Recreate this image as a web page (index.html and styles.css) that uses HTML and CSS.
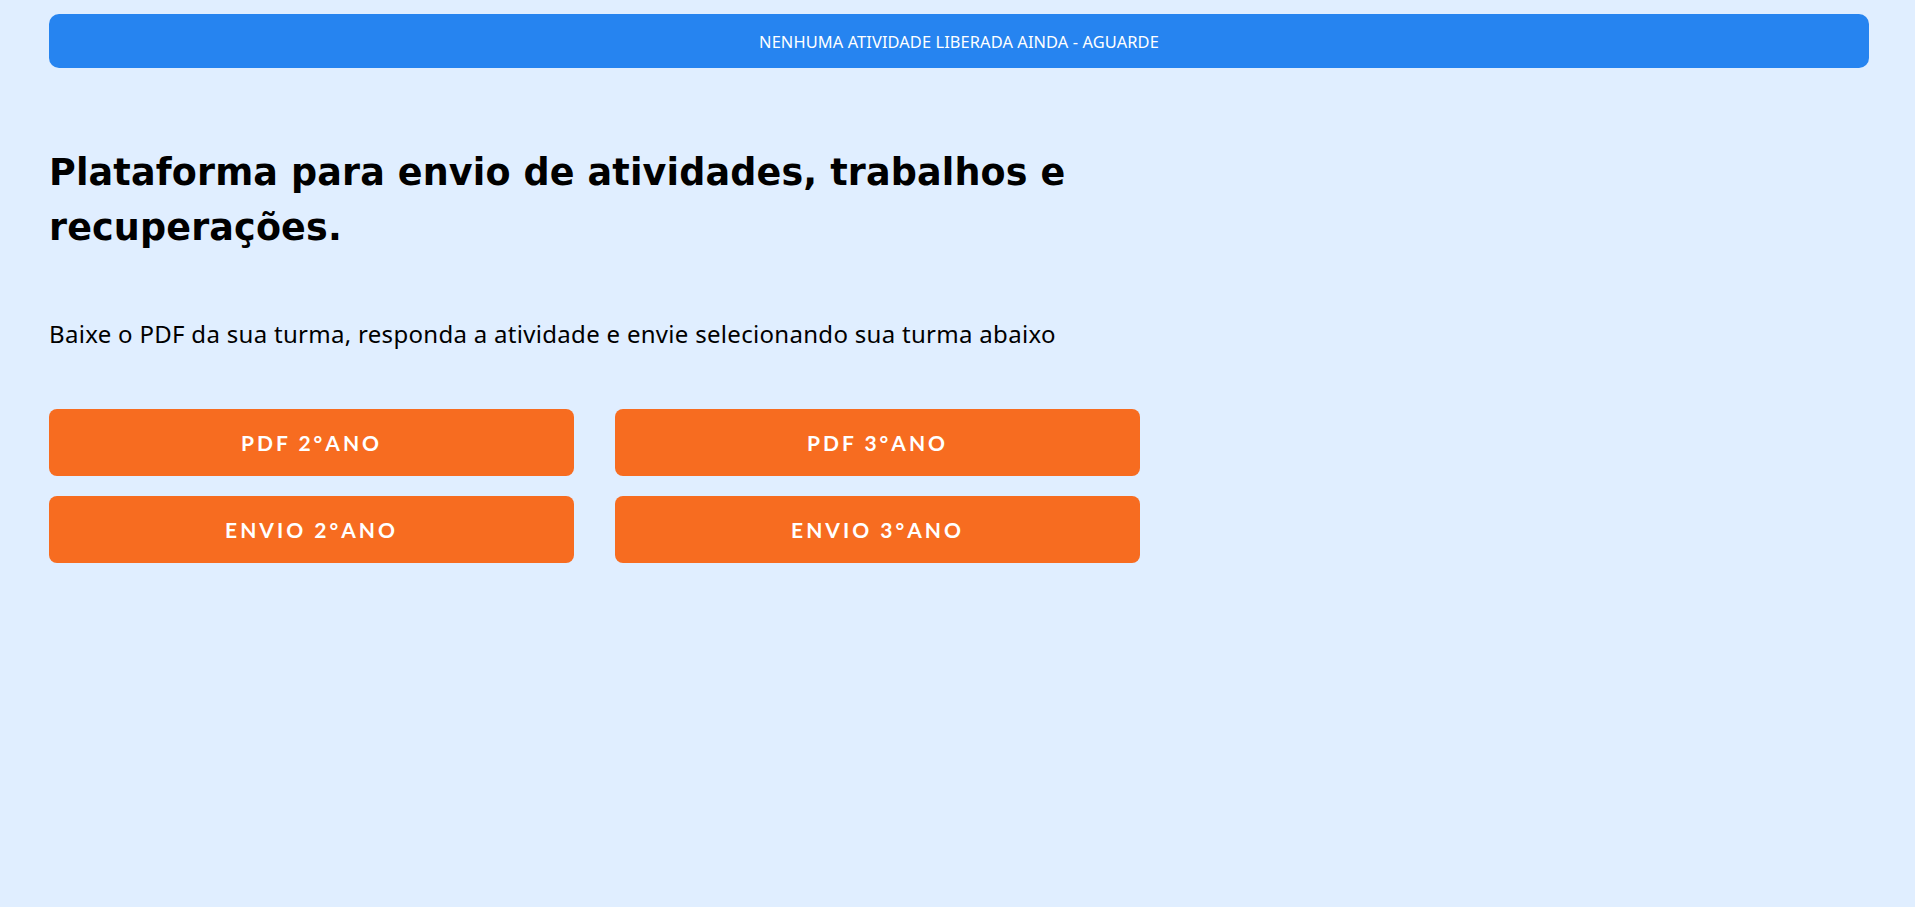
FILE: index.html
```html
<!DOCTYPE html>
<html lang="pt-BR">
<head>
<meta charset="utf-8">
<title>Plataforma de atividades</title>
<link rel="stylesheet" href="styles.css">
</head>
<body>
<div class="page">
  <div class="banner">NENHUMA ATIVIDADE LIBERADA AINDA - AGUARDE</div>
  <h1 class="title">Plataforma para envio de atividades, trabalhos e recuperações.</h1>
  <p class="lead">Baixe o PDF da sua turma, responda a atividade e envie selecionando sua turma abaixo</p>
  <div class="buttons">
    <a class="btn" href="#">PDF 2°ANO</a>
    <a class="btn" href="#">PDF 3°ANO</a>
    <a class="btn" href="#">ENVIO 2°ANO</a>
    <a class="btn" href="#">ENVIO 3°ANO</a>
  </div>
</div>
</body>
</html>
```
FILE: styles.css
```css
html, body {
  margin: 0;
  padding: 0;
  background: #e0eeff;
  height: 100%;
}
body {
  font-family: "Noto Sans", "Lato", sans-serif;
  color: #000;
}
.page {
  padding: 14px 46px 0 49px;
}
.banner {
  height: 54px;
  display: flex;
  align-items: center;
  justify-content: center;
  background: #2684f0;
  color: #fff;
  border-radius: 10px;
  font-family: "Noto Sans", sans-serif;
  font-size: 16.4px;
  letter-spacing: 0.1px;
}
.title {
  width: 1080px;
  margin: 77px 0 0;
  font-family: "DejaVu Sans", sans-serif;
  font-weight: 700;
  font-size: 36.5px;
  line-height: 55px;
  letter-spacing: 0.15px;
}
.lead {
  margin: 63px 0 0;
  font-family: "Noto Sans", sans-serif;
  font-size: 24px;
  line-height: 32px;
  letter-spacing: 0.3px;
}
.buttons {
  display: grid;
  grid-template-columns: 525px 525px;
  column-gap: 41px;
  row-gap: 20px;
  margin-top: 59px;
}
.btn {
  height: 67px;
  display: flex;
  align-items: center;
  justify-content: center;
  background: #f76c20;
  color: #fff;
  border-radius: 8px;
  text-decoration: none;
  font-family: "Lato", sans-serif;
  font-weight: 700;
  font-size: 21px;
  letter-spacing: 3px;
}
```
